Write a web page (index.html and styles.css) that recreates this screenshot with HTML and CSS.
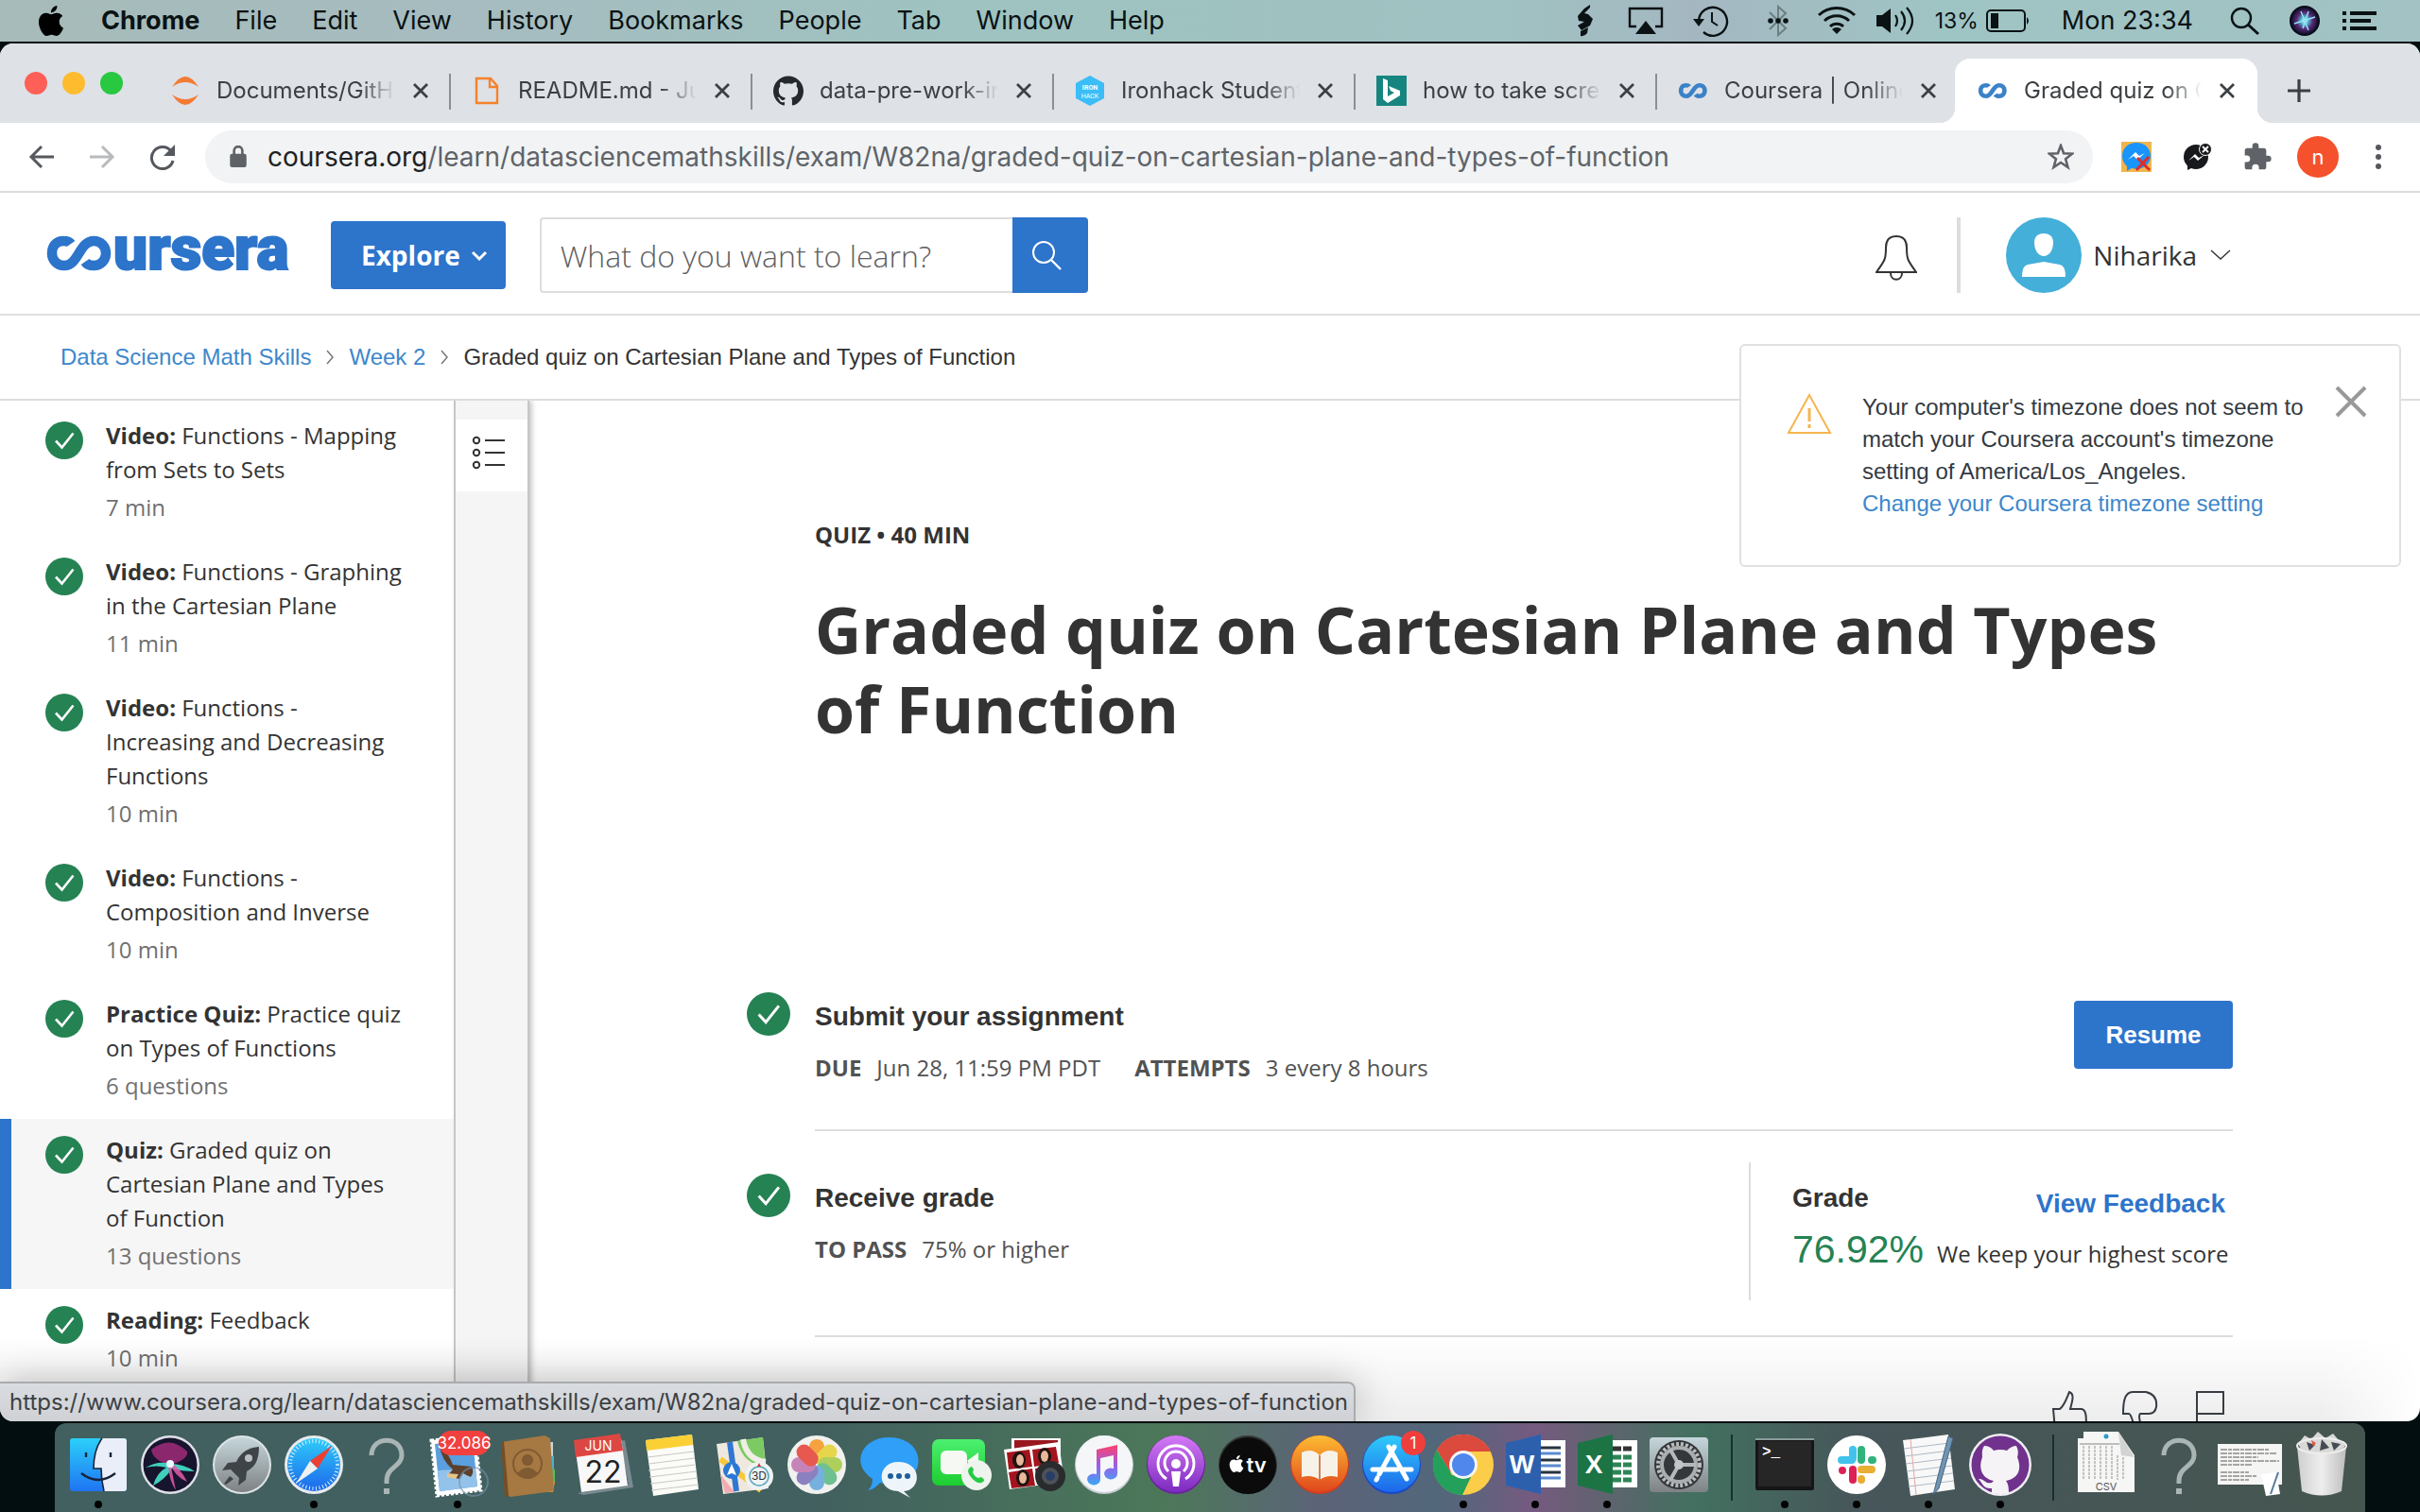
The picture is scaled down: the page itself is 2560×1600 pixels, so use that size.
FILE: index.html
```html
<!DOCTYPE html>
<html lang="en">
<head>
<meta charset="utf-8">
<title>Graded quiz on Cartesian Plane and Types of Function | Coursera</title>
<link rel="stylesheet" href="styles.css">
</head>
<body>
<svg class="defs" aria-hidden="true">
  <defs>
    <symbol id="check" viewBox="0 0 40 40"><circle cx="20" cy="20" r="20" fill="#258253"/><path d="M11 20.500l6.500 7L29.500 12.500" fill="none" stroke="#fff" stroke-width="2.600"/></symbol>
    <symbol id="close" viewBox="0 0 20 20"><path d="M3 3l14 14M17 3L3 17" stroke="currentColor" stroke-width="2.800" fill="none"/></symbol>
    <symbol id="apple" viewBox="0 0 24 24"><path d="M12.152 6.896c-.948 0-2.415-1.078-3.960-1.040-2.040.027-3.910 1.183-4.961 3.014-2.117 3.675-.546 9.103 1.519 12.090 1.013 1.454 2.208 3.090 3.792 3.039 1.520-.065 2.090-.987 3.935-.987 1.831 0 2.350.987 3.960.948 1.637-.026 2.676-1.480 3.676-2.948 1.156-1.688 1.636-3.325 1.662-3.415-.039-.013-3.182-1.221-3.220-4.857-.026-3.040 2.480-4.494 2.597-4.559-1.429-2.090-3.623-2.324-4.390-2.376-2-.156-3.675 1.090-4.610 1.090zM15.530 3.830c.843-1.012 1.400-2.427 1.245-3.830-1.207.052-2.662.805-3.532 1.818-.780.896-1.454 2.338-1.273 3.714 1.338.104 2.715-.688 3.559-1.701"/></symbol>
    <symbol id="infinity" viewBox="0 0 72 40"><path d="M27 10C25 7 22 7 19 7 11 7 7 13 7 20s5 13 13 13c15 0 16-26 31-26 8 0 13 6 13 13s-5 13-13 13c-4 0-7-1-9-4" fill="none" stroke="currentColor" stroke-width="10.500"/></symbol>
    <symbol id="question" viewBox="0 0 76 94"><path d="M23 34c0-21 32-21 32 0 0 12-16 12-16 27v3" fill="none" stroke="#a9b5b4" stroke-width="5"/><rect x="36" y="69" width="6" height="6" fill="#a9b5b4"/></symbol>
    <radialGradient id="g-siri"><stop offset="0" stop-color="#e8fbff"/><stop offset=".3" stop-color="#4fb3c9"/><stop offset=".6" stop-color="#5a2a78"/><stop offset="1" stop-color="#11122c"/></radialGradient>
    <linearGradient id="g-finder" x2="0" y2="1"><stop offset="0" stop-color="#2bd0fa"/><stop offset="1" stop-color="#1f74f3"/></linearGradient>
    <linearGradient id="g-silver" x2="0" y2="1"><stop offset="0" stop-color="#c5d6db"/><stop offset="1" stop-color="#7e8284"/></linearGradient>
    <linearGradient id="g-blue" x2="0" y2="1"><stop offset="0" stop-color="#2ecbfa"/><stop offset="1" stop-color="#1d67ea"/></linearGradient>
    <linearGradient id="g-green" x2="0" y2="1"><stop offset="0" stop-color="#4cf070"/><stop offset="1" stop-color="#1ccd30"/></linearGradient>
    <linearGradient id="g-purple" x2="0" y2="1"><stop offset="0" stop-color="#d37af5"/><stop offset="1" stop-color="#7c2bc0"/></linearGradient>
    <linearGradient id="g-orange" x2="0" y2="1"><stop offset="0" stop-color="#fdbc32"/><stop offset="1" stop-color="#e0461d"/></linearGradient>
    <linearGradient id="g-note" x2="0" y2="1"><stop offset="0" stop-color="#ff4268"/><stop offset=".5" stop-color="#9d5ce8"/><stop offset="1" stop-color="#3aa8f5"/></linearGradient>
    <linearGradient id="g-trash" x2="1" y2="0"><stop offset="0" stop-color="#cfcfcf"/><stop offset=".5" stop-color="#eee"/><stop offset="1" stop-color="#bdbdbd"/></linearGradient>
  </defs>
</svg>

<nav class="menubar" aria-label="Menu bar">
  <ul class="menus">
    <li><button type="button" aria-label="Apple"><svg class="apple"><use href="#apple"/></svg></button></li>
    <li><button type="button" class="app">Chrome</button></li>
    <li><button type="button">File</button></li>
    <li><button type="button">Edit</button></li>
    <li><button type="button">View</button></li>
    <li><button type="button">History</button></li>
    <li><button type="button">Bookmarks</button></li>
    <li><button type="button">People</button></li>
    <li><button type="button">Tab</button></li>
    <li><button type="button">Window</button></li>
    <li><button type="button">Help</button></li>
  </ul>
  <div class="tray">
    <svg class="w60" viewBox="0 0 44 44"><path d="M27 5l-6 4-7 8 1 5 6 1-7 4 4 5 9-5 3-7-5-5-4-1 6-6z" fill="#0a1214"/><path d="M17 33l8-4-1 6q-3 4-7 3z" fill="#0a1214"/></svg>
    <svg class="w68" viewBox="0 0 44 44"><path d="M12 28H5V9h34v19h-7" fill="none" stroke="#0a1214" stroke-width="2.400"/><path d="M22 22l11 14H11z" fill="#0a1214"/></svg>
    <svg class="w72" viewBox="0 0 44 44"><path d="M8 22A15 15 0 1 1 13 34" fill="none" stroke="#0a1214" stroke-width="2.400"/><path d="M2 20h12l-6 8z" fill="#0a1214"/><path d="M22 13v10l6 4" stroke="#0a1214" stroke-width="2" fill="none"/></svg>
    <svg class="w68" viewBox="0 0 44 44"><path d="M13 13l17 17-8 7V7l8 7-17 17" fill="none" stroke="#6b7f80" stroke-width="2"/><g fill="#0a1214"><circle cx="14" cy="22" r="2.800"/><circle cx="22" cy="22" r="2.800"/><circle cx="30" cy="22" r="2.800"/></g></svg>
    <svg class="w56" viewBox="0 0 44 44"><path d="M3 16a28 28 0 0 1 38 0M9 22a19 19 0 0 1 26 0M15 28a10 10 0 0 1 14 0" fill="none" stroke="#0a1214" stroke-width="3"/><path d="M17 31a7 7 0 0 1 10 0l-5 5z" fill="#0a1214"/></svg>
    <svg class="w68" viewBox="0 0 44 44"><path d="M2 16h6l9-7v26l-9-7H2z" fill="#0a1214"/><path d="M22 16q4 6 0 12M28 12q8 10 0 20M34 8q12 14 0 28" fill="none" stroke="#0a1214" stroke-width="2.200"/></svg>
    <span class="percent">13%</span>
    <svg class="battery" viewBox="0 0 48 44"><rect x="1" y="11" width="40" height="22" rx="4" fill="none" stroke="#0a1214" stroke-width="2"/><rect x="5" y="14" width="8" height="16" fill="#0a1214"/><path d="M43 18q4 4 0 8z" fill="#0a1214"/></svg>
    <time class="clock">Mon 23:34</time>
    <svg class="w68" viewBox="0 0 44 44"><circle cx="19" cy="19" r="10" fill="none" stroke="#0a1214" stroke-width="2.400"/><path d="M26 26l11 10" stroke="#0a1214" stroke-width="3"/></svg>
    <svg class="w60" viewBox="0 0 44 44"><circle cx="22" cy="22" r="16" fill="#0a0a1c"/><circle cx="22" cy="22" r="14" fill="url(#g-siri)"/><path d="M11 25l22-7M18 12l8 20M26 12l-6 18" stroke="#8fe4f5" stroke-width="1.500"/></svg>
    <svg class="w56" viewBox="0 0 44 44"><path d="M4 14h4M12 14h28M4 22h4M12 22h22M4 30h4M12 30h28" stroke="#0a1214" stroke-width="4"/></svg>
  </div>
</nav>

<div class="window">
  <div class="tabstrip">
    <div class="lights"><button type="button" class="red" aria-label="Close window"></button><button type="button" class="amber" aria-label="Minimise"></button><button type="button" class="lime" aria-label="Zoom"></button></div>
    <div class="tab"><svg class="fav" viewBox="0 0 32 32"><path d="M2 12q14-22 28 0Q16 2 2 12zM2 20q14 22 28 0-14 10-28 0z" fill="#f37b34"/></svg><span class="title">Documents/GitHub</span><button type="button" class="x" aria-label="Close tab"><svg><use href="#close"/></svg></button></div>
    <div class="tab"><svg class="fav" viewBox="0 0 32 32"><path d="M5 3h15l7 8v18H5zM19 3v9h8" fill="none" stroke="#f5822b" stroke-width="2.400"/></svg><span class="title">README.md - Jupyter</span><button type="button" class="x" aria-label="Close tab"><svg><use href="#close"/></svg></button></div>
    <div class="tab"><svg class="fav" viewBox="0 0 24 24"><path fill="#24292e" d="M12 .297c-6.630 0-12 5.373-12 12 0 5.303 3.438 9.800 8.205 11.385.600.113.820-.258.820-.577 0-.285-.010-1.040-.015-2.040-3.338.724-4.042-1.610-4.042-1.610C4.422 18.070 3.633 17.700 3.633 17.700c-1.087-.744.084-.729.084-.729 1.205.084 1.838 1.236 1.838 1.236 1.070 1.835 2.809 1.305 3.495.998.108-.776.417-1.305.760-1.605-2.665-.300-5.466-1.332-5.466-5.930 0-1.310.465-2.380 1.235-3.220-.135-.303-.540-1.523.105-3.176 0 0 1.005-.322 3.300 1.230.960-.267 1.980-.399 3-.405 1.020.006 2.040.138 3 .405 2.280-1.552 3.285-1.230 3.285-1.230.645 1.653.240 2.873.120 3.176.765.840 1.230 1.910 1.230 3.220 0 4.610-2.805 5.625-5.475 5.920.420.360.810 1.096.810 2.220 0 1.606-.015 2.896-.015 3.286 0 .315.210.690.825.570C20.565 22.092 24 17.592 24 12.297c0-6.627-5.373-12-12-12"/></svg><span class="title">data-pre-work-ironhack</span><button type="button" class="x" aria-label="Close tab"><svg><use href="#close"/></svg></button></div>
    <div class="tab"><svg class="fav" viewBox="0 0 32 32"><path d="M16 0l15 8v16l-15 8-15-8V8z" fill="#3bbdf7"/><text x="16" y="15" class="hex b">IRON</text><text x="16" y="24" class="hex">HACK</text></svg><span class="title">Ironhack Student Portal</span><button type="button" class="x" aria-label="Close tab"><svg><use href="#close"/></svg></button></div>
    <div class="tab"><svg class="fav" viewBox="0 0 32 32"><path d="M0 0h32v32H0z" fill="#16857f"/><path d="M7 3l5 2v17l7-4-4-2-2-5 12 5v5l-13 8-5-4z" fill="#fff"/></svg><span class="title">how to take screenshot</span><button type="button" class="x" aria-label="Close tab"><svg><use href="#close"/></svg></button></div>
    <div class="tab last"><svg class="fav co"><use href="#infinity"/></svg><span class="title">Coursera | Online Courses</span><button type="button" class="x" aria-label="Close tab"><svg><use href="#close"/></svg></button></div>
    <div class="tab active"><svg class="fav co"><use href="#infinity"/></svg><span class="title">Graded quiz on Cartesian</span><button type="button" class="x" aria-label="Close tab"><svg><use href="#close"/></svg></button></div>
    <button type="button" class="newtab" aria-label="New tab"><svg viewBox="0 0 24 24"><path d="M12 0v24M0 12h24" stroke="#3c4043" stroke-width="3.200"/></svg></button>
  </div>

  <div class="toolbar">
    <button type="button" aria-label="Back"><svg viewBox="0 0 28 28"><path d="M27 14H3M14 3L3 14l11 11" fill="none" stroke="#55595e" stroke-width="3"/></svg></button>
    <button type="button" aria-label="Forward"><svg viewBox="0 0 28 28"><path d="M1 14h24M14 3l11 11-11 11" fill="none" stroke="#b8babd" stroke-width="3"/></svg></button>
    <button type="button" aria-label="Reload"><svg viewBox="0 0 28 28"><path d="M23 8A11.500 11.500 0 1 0 25 18" fill="none" stroke="#55595e" stroke-width="3"/><path d="M27 1v12H15z" fill="#55595e"/></svg></button>
    <div class="omnibox">
      <svg class="lock" viewBox="0 0 16 22"><rect y="8" width="16" height="13" rx="2" fill="#5f6368"/><path d="M4 9V5a4 4 0 0 1 8 0v4" fill="none" stroke="#5f6368" stroke-width="2.400"/></svg>
      <div class="url" role="textbox" contenteditable="true" spellcheck="false" aria-label="Address"><span>coursera.org</span>/learn/datasciencemathskills/exam/W82na/graded-quiz-on-cartesian-plane-and-types-of-function</div>
      <button type="button" aria-label="Bookmark this page"><svg viewBox="0 0 28 28"><path d="M14 2l3.100 8.300 9 .400-7 5.600 2.400 8.700-7.500-5-7.500 5 2.400-8.700-7-5.600 9-.400z" fill="none" stroke="#5f6368" stroke-width="2.600"/></svg></button>
    </div>
    <button type="button" class="ext" aria-label="Messenger extension"><svg viewBox="0 0 32 32"><path d="M0 0h32v32H0z" fill="#f0b54c"/><path d="M16 1C6 1 1 8 1 15c0 5 2 8 5 11v5l5-3c12 3 20-4 20-13C31 8 26 1 16 1z" fill="#1a94fd"/><path d="M7 19l8-8 4 4 6-3-8 7-4-4z" fill="#fff"/><path d="M17 17l13 13M29 16L16 30" stroke="#e22b24" stroke-width="3"/></svg></button>
    <button type="button" class="ext" aria-label="Messenger helper"><svg viewBox="0 0 32 32"><circle cx="15" cy="16" r="13" fill="#17191c"/><path d="M6 20v10l8-4z" fill="#17191c"/><path d="M7 20l7-7 4 4 6-3-7 6-4-4z" fill="#fff"/><circle cx="25" cy="8" r="6.500" fill="#17191c" stroke="#fff"/><path d="M22 5l6 6M28 5l-6 6" stroke="#fff" stroke-width="1.800"/></svg></button>
    <button type="button" class="ext" aria-label="Extensions"><svg viewBox="0 0 24 24"><path d="M20.500 11H19V7a2 2 0 0 0-2-2h-4V3.500a2.500 2.500 0 0 0-5 0V5H4a2 2 0 0 0-2 2v3.800h1.500a2.700 2.700 0 0 1 0 5.400H2V20a2 2 0 0 0 2 2h3.800v-1.500a2.700 2.700 0 0 1 5.400 0V22H17a2 2 0 0 0 2-2v-4h1.500a2.500 2.500 0 0 0 0-5z" fill="#5f6368"/></svg></button>
    <button type="button" class="profile" aria-label="Profile">n</button>
    <button type="button" class="more" aria-label="Chrome menu"><svg viewBox="0 0 8 28"><g fill="#55595e"><circle cx="4" cy="4" r="3"/><circle cx="4" cy="14" r="3"/><circle cx="4" cy="24" r="3"/></g></svg></button>
  </div>

  <div class="page">
    <header class="site">
      <a class="logo" href="#" aria-label="Coursera home"><svg><use href="#infinity"/></svg><span>ursera</span></a>
      <button type="button" class="explore">Explore <svg viewBox="0 0 16 16"><path d="M1 5l7 7 7-7" fill="none" stroke="#fff" stroke-width="3"/></svg></button>
      <form class="search"><input type="text" aria-label="Search" placeholder="What do you want to learn?"><button type="button" aria-label="Search"><svg viewBox="0 0 32 32"><circle cx="13" cy="13" r="11" fill="none" stroke="#fff" stroke-width="2"/><path d="M21 21l10 10" stroke="#fff" stroke-width="2.400"/></svg></button></form>
      <button type="button" class="bell" aria-label="Notifications"><svg viewBox="0 0 44 50"><path d="M22 2c-8 0-11 5-11 12 0 14-2 14-10 26h42c-8-12-10-12-10-26 0-7-3-12-11-12z" fill="none" stroke="#333" stroke-width="2"/><path d="M16 41c0 9 12 9 12 0" fill="none" stroke="#333" stroke-width="2"/></svg></button>
      <button type="button" class="user"><svg class="avatar" viewBox="0 0 80 80"><circle cx="40" cy="40" r="40" fill="#44afd9"/><path d="M40 17c7 0 10 4 10 10 0 7-4 14-10 14s-10-7-10-14c0-6 3-10 10-10z" fill="#fff"/><path d="M17 63q0-12 6-13l17-3 17 3q6 1 6 13z" fill="#fff"/></svg>Niharika<svg class="caret" viewBox="0 0 22 12"><path d="M1 1l10 9L21 1" fill="none" stroke="#333" stroke-width="1.400"/></svg></button>
    </header>
    <nav class="crumbs" aria-label="Breadcrumb">
      <a href="#">Data Science Math Skills</a><svg viewBox="0 0 8 16"><path d="M1 1l6 7-6 7" fill="none" stroke="#777" stroke-width="1.500"/></svg>
      <a href="#">Week 2</a><svg viewBox="0 0 8 16"><path d="M1 1l6 7-6 7" fill="none" stroke="#777" stroke-width="1.500"/></svg>
      <span>Graded quiz on Cartesian Plane and Types of Function</span>
    </nav>
    <div class="columns">
      <ul class="lessons">
        <li><a href="#"><svg><use href="#check"/></svg><span><b>Video:</b> Functions - Mapping from Sets to Sets<small>7 min</small></span></a></li>
        <li><a href="#"><svg><use href="#check"/></svg><span><b>Video:</b> Functions - Graphing in the Cartesian Plane<small>11 min</small></span></a></li>
        <li><a href="#"><svg><use href="#check"/></svg><span><b>Video:</b> Functions - Increasing and Decreasing Functions<small>10 min</small></span></a></li>
        <li><a href="#"><svg><use href="#check"/></svg><span><b>Video:</b> Functions - Composition and Inverse<small>10 min</small></span></a></li>
        <li><a href="#"><svg><use href="#check"/></svg><span><b>Practice Quiz:</b> Practice quiz on Types of Functions<small>6 questions</small></span></a></li>
        <li class="current"><a href="#"><svg><use href="#check"/></svg><span><b>Quiz:</b> Graded quiz on Cartesian Plane and Types of Function<small>13 questions</small></span></a></li>
        <li><a href="#"><svg><use href="#check"/></svg><span><b>Reading:</b> Feedback<small>10 min</small></span></a></li>
      </ul>
      <div class="rail"><button type="button" aria-label="Course outline"><svg viewBox="0 0 36 36"><g fill="none" stroke="#333" stroke-width="2"><circle cx="5" cy="5" r="3.200"/><circle cx="5" cy="18" r="3.200"/><circle cx="5" cy="31" r="3.200"/><path d="M14 5h21M14 18h21M14 31h21"/></g></svg></button></div>
      <main>
        <p class="kind">QUIZ • 40 MIN</p>
        <h1>Graded quiz on Cartesian Plane and Types of Function</h1>
        <section class="step">
          <svg class="tick"><use href="#check"/></svg>
          <div class="body">
            <div><h2>Submit your assignment</h2>
            <dl><dt>DUE</dt><dd>Jun 28, 11:59 PM PDT</dd><dt>ATTEMPTS</dt><dd>3 every 8 hours</dd></dl></div>
            <button type="button" class="resume">Resume</button>
          </div>
        </section>
        <section class="step">
          <svg class="tick"><use href="#check"/></svg>
          <div class="body graded">
            <div><h2>Receive grade</h2>
            <dl><dt>TO PASS</dt><dd>75% or higher</dd></dl></div>
            <div class="grade">
              <div class="row"><h2>Grade</h2><a href="#">View Feedback</a></div>
              <p><strong>76.92%</strong>We keep your highest score</p>
            </div>
          </div>
        </section>
        <div class="feedback">
          <button type="button" aria-label="Like"><svg viewBox="0 0 40 40"><path d="M4 42L2 20h7c5-4 7-11 10-18 6 2 3 10 1 18h12c5 1 5 7 5 22" fill="none" stroke="#3a4047" stroke-width="2"/></svg></button>
          <button type="button" aria-label="Dislike"><svg viewBox="0 0 40 40"><path d="M14 42c-1-8-4-17-6-17H2C2 14 3 2 12 2h14c9 2 12 8 11 16-1 5-4 7-8 7h-9c-3 3 1 8 1 17" fill="none" stroke="#3a4047" stroke-width="2"/></svg></button>
          <button type="button" aria-label="Flag"><svg viewBox="0 0 40 40"><path d="M6 42V2h28v23H6" fill="none" stroke="#3a4047" stroke-width="2"/></svg></button>
        </div>
      </main>
    </div>
    <aside class="toast" role="alert">
      <svg class="warn" viewBox="0 0 48 44"><path d="M24 2l22 40H2z" fill="none" stroke="#f6b44f" stroke-width="2"/><path d="M24 16v14M24 33v4" stroke="#f6b44f" stroke-width="3"/></svg>
      <p>Your computer's timezone does not seem to match your Coursera account's timezone setting of America/Los_Angeles. <a href="#">Change your Coursera timezone setting</a></p>
      <button type="button" aria-label="Dismiss"><svg viewBox="0 0 34 34"><path d="M2 2l30 30M32 2L2 32" stroke="#999" stroke-width="4"/></svg></button>
    </aside>
  </div>
  <div class="shade"></div>
  <div class="status">https://www.coursera.org/learn/datasciencemathskills/exam/W82na/graded-quiz-on-cartesian-plane-and-types-of-function</div>
</div>

<nav class="dock" aria-label="Dock">
  <button type="button" class="on" aria-label="Finder"><svg viewBox="0 0 76 94"><rect x="8" y="16" width="60" height="56" rx="3" fill="url(#g-finder)"/><path d="M42 16h23q3 0 3 3v50q0 3-3 3H44q-3-12-3-24h-8q0-20 9-32z" fill="#e9eef8"/><path d="M25 31v5M51 31v5M20 53q18 14 36 0" fill="none" stroke="#17233b" stroke-width="2.400"/><path d="M42 16q-9 12-9 32h8q0 12 3 24" fill="none" stroke="#17233b" stroke-width="1.600"/></svg></button>
  <button type="button" aria-label="Siri"><svg viewBox="0 0 76 94"><circle cx="38" cy="44" r="31" fill="#dfe0e8"/><circle cx="38" cy="44" r="28.500" fill="#17142d"/><path d="M18 28q20-16 38 2 2 8-18 14-18-4-20-16z" fill="#a02a78" opacity=".85"/><path d="M12 47q14-8 26-4 14 0 26 8-14 0-24-3-8 12-20 18 4-14 14-19-10-3-22 0z" fill="#3fd0bd"/><path d="M38 42l6 29q-7-10-8-26zM38 42q10 4 18 20-14-6-18-20z" fill="#e35ba9" opacity=".85"/><circle cx="38" cy="43" r="4" fill="#eaffff"/></svg></button>
  <button type="button" aria-label="Launchpad"><svg viewBox="0 0 76 94"><circle cx="38" cy="44" r="31" fill="#dde4e6"/><circle cx="38" cy="44" r="29" fill="url(#g-silver)"/><path d="M56 25c-14 1-20 8-24 16l-9 1-6 8 9-1 9 9-1 8 8-6 1-9c8-4 13-11 13-26zM25 56l-6 8 2 1 8-6z" fill="#3f4449"/><circle cx="45" cy="37" r="4" fill="#b8c0c4"/></svg></button>
  <button type="button" class="on" aria-label="Safari"><svg viewBox="0 0 76 94"><circle cx="38" cy="44" r="31" fill="#e7ebed"/><circle cx="38" cy="44" r="28" fill="url(#g-blue)"/><circle cx="38" cy="44" r="25" fill="none" stroke="#d7f1ff" stroke-width="4" stroke-dasharray="1 2.600"/><path d="M57 24L42 48l-8-8z" fill="#ed4034"/><path d="M19 64l15-24 8 8z" fill="#eef0f2"/></svg></button>
  <button type="button" aria-label="Unknown application"><svg><use href="#question"/></svg></button>
  <button type="button" class="on" aria-label="Mail"><svg viewBox="0 0 76 94"><path d="M10 18l47-5 6 58-47 6z" fill="#fff" stroke="#fff" stroke-width="3" stroke-dasharray="3 2"/><path d="M14 22l40-5 5 50-40 5z" fill="#5b9fdf"/><path d="M17 50l40-2 2 19-40 5z" fill="#93c3ea"/><path d="M19 24q10 8 14 20l20 2q3 6-1 11-5-2-8-4l-4 6-13-3 6-7q-12-10-14-25z" fill="#5c402c"/><path d="M27 53l12 1-3 5-9-2z" fill="#e5c48a"/><circle cx="55" cy="62" r="15" fill="none" stroke="#7694ad" stroke-width="2" opacity=".6"/><rect x="18" y="8" width="54" height="26" rx="13" fill="#f2403f"/><text x="45" y="27" class="badge">32.086</text></svg></button>
  <button type="button" aria-label="Contacts"><svg viewBox="0 0 76 94"><path d="M55 20h8v15h-8z" fill="#cad3d6"/><path d="M56 35h8v14h-8z" fill="#4cb0cf"/><path d="M57 49h8v13h-8z" fill="#53be5a"/><path d="M58 62h7l-2 11h-6z" fill="#e99c29"/><path d="M8 20l46-7 6 3 4 56-46 6-4-3z" fill="#a67842"/><path d="M8 20l4 58 4-1-5-58z" fill="#754e25"/><g fill="none" stroke="#805a31" stroke-width="2"><circle cx="36" cy="43" r="15"/></g><circle cx="36" cy="39" r="6" fill="#805a31"/><path d="M25 53q11-12 22 0-10 9-22 0z" fill="#805a31"/></svg></button>
  <button type="button" aria-label="Calendar"><svg viewBox="0 0 76 94"><path d="M13 74l54-9-9-46 5-1 9 50-53 8z" fill="#7b8a91"/><path d="M10 23l49-7 7 50-49 7z" fill="#f8f8f8"/><path d="M9 18l49-7 3 18-50 7z" fill="#dd4743"/><text x="35" y="29" class="cal-m">JUN</text><text x="40" y="63" class="cal-d">22</text></svg></button>
  <button type="button" aria-label="Notes"><svg viewBox="0 0 76 94"><path d="M9 18l49-6 7 58-48 7z" fill="#fbfbf8"/><path d="M9 18l49-6 1 11-49 6z" fill="#fbd034"/><path d="M11 36l49-6M12 43l49-6M12 50l49-6M13 57l50-6M14 64l50-6M15 71l50-6" stroke="#c8c8c4" stroke-width="1.200"/></svg></button>
  <button type="button" aria-label="Maps"><svg viewBox="0 0 76 94"><path d="M8 22l49-7 6 54-48 6z" fill="#eee8de"/><path d="M30 19l27-4 3 31q-24-2-30-27z" fill="#7bcb62"/><path d="M36 17q4 22 24 24" fill="none" stroke="#f0eee6" stroke-width="6"/><path d="M12 38l43 33" stroke="#f9c838" stroke-width="6"/><path d="M22 20l7 52" stroke="#3177d1" stroke-width="6"/><path d="M12 54l5 20 10-1z" fill="#f4a9b4"/><circle cx="24" cy="50" r="9" fill="#2a78d6"/><path d="M24 43l5 12-5-2-5 2z" fill="#fff"/><circle cx="53" cy="56" r="15" fill="#eef2f3"/><circle cx="53" cy="56" r="10" fill="none" stroke="#59a4ba" stroke-width="1.500"/><path d="M53 42l2 4h-4z" fill="#d5362f"/><text x="53" y="60" class="tiny">3D</text></svg></button>
  <button type="button" aria-label="Photos"><svg viewBox="0 0 76 94"><circle cx="38" cy="44" r="31" fill="#f1f1ef"/><g opacity=".9"><rect x="30" y="17" width="16" height="26" rx="8" fill="#f59b2d"/><rect x="30" y="17" width="16" height="26" rx="8" fill="#e6d43a" transform="rotate(45 38 44)"/><rect x="30" y="17" width="16" height="26" rx="8" fill="#a7cc4b" transform="rotate(90 38 44)"/><rect x="30" y="17" width="16" height="26" rx="8" fill="#62bb86" transform="rotate(135 38 44)"/><rect x="30" y="17" width="16" height="26" rx="8" fill="#69aade" transform="rotate(180 38 44)"/><rect x="30" y="17" width="16" height="26" rx="8" fill="#8175bd" transform="rotate(225 38 44)"/><rect x="30" y="17" width="16" height="26" rx="8" fill="#c278b3" transform="rotate(270 38 44)"/><rect x="30" y="17" width="16" height="26" rx="8" fill="#e6493d" transform="rotate(315 38 44)"/></g></svg></button>
  <button type="button" aria-label="Messages"><svg viewBox="0 0 76 94"><path d="M38 15c42 0 42 49 0 50l-9-2q-6 7-13 8 5-4 5-12C-4 42 11 15 38 15z" fill="#2f9ff8"/><path d="M48 41c26 0 25 30 6 31l7 7-13-7c-24-1-22-31 0-31z" fill="#eef5fa"/><g fill="#1f5f98"><circle cx="40" cy="56" r="3"/><circle cx="49" cy="56" r="3"/><circle cx="58" cy="56" r="3"/></g></svg></button>
  <button type="button" aria-label="FaceTime"><svg viewBox="0 0 76 94"><rect x="8" y="17" width="56" height="49" rx="7" fill="url(#g-green)"/><rect x="17" y="29" width="28" height="25" rx="6" fill="#f5f8f3"/><path d="M45 40l12-9v22z" fill="#f5f8f3"/><circle cx="55" cy="55" r="16" fill="#eff3ee"/><path d="M48 47q2-3 4 2l-1 3q2 5 6 6l3-1q5 3 2 5-4 3-9-1-6-5-7-10 0-3 2-4z" fill="#26cb45"/></svg></button>
  <button type="button" aria-label="Photo Booth"><svg viewBox="0 0 76 94"><rect x="16" y="16" width="52" height="30" fill="#fff"/><rect x="19" y="18" width="46" height="26" fill="#9a171f"/><path d="M8 28l58-8 6 42-58 8z" fill="#fff"/><path d="M11 31l24-3 3 18-25 3zM38 28l25-3 3 17-26 4zM13 52l25-4 3 18-25 3zM41 48l25-3 2 17-25 3z" fill="#a3151e"/><g fill="#1e1412"><ellipse cx="24" cy="39" rx="7" ry="9"/><ellipse cx="51" cy="35" rx="7" ry="9"/><ellipse cx="28" cy="58" rx="7" ry="9"/></g><g fill="#e9b799"><ellipse cx="25" cy="39" rx="4" ry="6"/><ellipse cx="51" cy="35" rx="4" ry="6"/><ellipse cx="28" cy="58" rx="4" ry="6"/></g><circle cx="57" cy="56" r="16" fill="#292b2d"/><circle cx="57" cy="56" r="9" fill="#4e5257"/><circle cx="57" cy="56" r="5" fill="#293d67"/></svg></button>
  <button type="button" aria-label="Music"><svg viewBox="0 0 76 94"><circle cx="38" cy="44" r="31" fill="#c8cdd2"/><circle cx="38" cy="43" r="30" fill="#f5f6f8"/><path d="M30 28l22-5v30a7 6 0 1 1-4-5V34l-14 3v22a7 6 0 1 1-4-5z" fill="url(#g-note)"/></svg></button>
  <button type="button" aria-label="Podcasts"><svg viewBox="0 0 76 94"><circle cx="38" cy="44" r="31" fill="#6c249b"/><circle cx="38" cy="43" r="30" fill="url(#g-purple)"/><g fill="none" stroke="#fff" stroke-width="3"><path d="M28 59a19 19 0 1 1 20 0M30 51a12 12 0 1 1 16 0"/></g><circle cx="38" cy="43" r="5" fill="#fff"/><path d="M33 51h10l-2 16h-6z" fill="#fff"/></svg></button>
  <button type="button" aria-label="TV"><svg viewBox="0 0 76 94"><circle cx="38" cy="44" r="31" fill="#353535"/><circle cx="38" cy="45" r="30" fill="#0b0b0b"/><use href="#apple" x="17" y="34" width="18" height="18" fill="#fff"/><text x="47" y="52" class="tv">tv</text></svg></button>
  <button type="button" aria-label="Books"><svg viewBox="0 0 76 94"><circle cx="38" cy="44" r="31" fill="#cf3d1c"/><circle cx="38" cy="43" r="30" fill="url(#g-orange)"/><path d="M38 34q-8-8-19-3v26q11-3 19 3 8-6 19-3V31q-11-5-19 3z" fill="#f7f2e8"/><path d="M38 34v26" stroke="#c65a28" stroke-width="1.500"/></svg></button>
  <button type="button" aria-label="App Store"><svg viewBox="0 0 76 94"><circle cx="38" cy="44" r="31" fill="#1749c9"/><circle cx="38" cy="43" r="30" fill="url(#g-blue)"/><path d="M41 25L25 54M35 25l19 34M18 49h26M51 49h8M23 58l-1 2" stroke="#fff" stroke-width="5" stroke-linecap="round"/><circle cx="61" cy="21" r="13" fill="#ef3f3d"/><text x="61" y="27" class="badge">1</text></svg></button>
  <button type="button" class="on" aria-label="Chrome"><svg viewBox="0 0 76 94"><circle cx="38" cy="44" r="32" fill="#fccd48"/><path d="M38 12A32 32 0 0 1 67 30H38L24 52 10 28A32 32 0 0 1 38 12z" fill="#dc493d"/><path d="M10 28l16 27 20 2-9 19A32 32 0 0 1 10 28z" fill="#22a05c"/><circle cx="38" cy="44" r="15" fill="#f5f5f5"/><circle cx="38" cy="44" r="12" fill="#5087ec"/></svg></button>
  <button type="button" class="on" aria-label="Word"><svg viewBox="0 0 76 94"><path d="M40 18h30v50H40z" fill="#fff"/><path d="M44 26h21M44 39h21M44 52h21" stroke="#28343f" stroke-width="3"/><path d="M44 32h21M44 45h21M44 58h21" stroke="#5a8ad1" stroke-width="3"/><path d="M7 21l37-9v63L7 66z" fill="#2c60ad"/><text x="24" y="53" class="office">W</text></svg></button>
  <button type="button" class="on" aria-label="Excel"><svg viewBox="0 0 76 94"><path d="M40 18h30v50H40z" fill="#fff"/><path d="M44 27h21" stroke="#333" stroke-width="5" stroke-dasharray="9 2"/><path d="M44 36h21M44 44h21M44 52h21M44 60h21" stroke="#2d8555" stroke-width="5" stroke-dasharray="9 2"/><path d="M7 21l37-9v63L7 66z" fill="#1c7445"/><text x="24" y="53" class="office">X</text></svg></button>
  <button type="button" aria-label="System Preferences"><svg viewBox="0 0 76 94"><rect x="7" y="15" width="62" height="58" rx="4" fill="url(#g-silver)"/><circle cx="38" cy="44" r="26" fill="#35383a"/><circle cx="38" cy="44" r="22" fill="none" stroke="#babdbe" stroke-width="4" stroke-dasharray="3 2"/><circle cx="38" cy="44" r="18" fill="none" stroke="#aaaeb0" stroke-width="4"/><path d="M38 44h18M38 44l-9-16M38 44l-9 16" stroke="#b5b9ba" stroke-width="4"/><circle cx="38" cy="44" r="5" fill="#c3c6c7"/></svg></button>
  <hr>
  <button type="button" class="on" aria-label="Terminal"><svg viewBox="0 0 76 94"><rect x="7" y="16" width="62" height="55" rx="2" fill="#151515"/><rect x="10" y="19" width="56" height="48" fill="#262626"/><path d="M7 16h62v2H7z" fill="#899b9d"/><text x="14" y="35" class="term">&gt;_</text></svg></button>
  <button type="button" class="on" aria-label="Slack"><svg viewBox="0 0 76 94"><circle cx="38" cy="44" r="31" fill="#fff"/><g stroke-width="8" stroke-linecap="round"><path d="M34 28v9M22 39h11" stroke="#42c3ec"/><path d="M43 28v11M54 39h1" stroke="#31b47b"/><path d="M43 49h11M43 59v1" stroke="#e9ae34"/><path d="M34 49v11M23 50h0" stroke="#df2057"/></g></svg></button>
  <button type="button" class="on" aria-label="TextEdit"><svg viewBox="0 0 76 94"><path d="M11 18l48-6 7 58-47 7z" fill="#f8f8f8"/><path d="M12 27l48-6M13 35l48-6M14 43l48-6M15 51l48-6M16 59l48-6M17 67l48-6" stroke="#aeb9c3"/><path d="M19 17l6 59" stroke="#e8a5a5"/><path d="M59 14l5 2-15 53-6 7 2-8z" fill="#6f95b5" stroke="#47637d"/></svg></button>
  <button type="button" class="on" aria-label="GitHub Desktop"><svg viewBox="0 0 76 94"><circle cx="38" cy="44" r="33" fill="#f0eef3"/><circle cx="38" cy="44" r="30.500" fill="#71328d"/><path d="M21 24q6 0 10 5 7-2 14 0 5-5 10-5 3 6 1 12c6 15-1 23-12 25q3 3 3 13-9 2-18 0v-5c-9 1-10-6-14-10 6-1 7 6 14 4l2-2c-11-2-17-12-12-25q-1-8 2-12z" fill="#f5f3f5"/></svg></button>
  <hr>
  <button type="button" aria-label="Downloads"><svg viewBox="0 0 76 94"><path d="M14 9h37l17 25v39H8V16h6z" fill="#f6f6f5"/><path d="M14 24v36M20 24v36M26 24v36M32 24v36M38 24v36M44 24v36M50 34v26M56 36v24" stroke="#c4c4c4" stroke-width="2" stroke-dasharray="3 1"/><path d="M10 22h42" stroke="#aaa" stroke-width="1.500"/><path d="M51 9q2 18 3 25l14 2z" fill="#d2d3d3"/><circle cx="38" cy="14" r="2.500" fill="#2e98cc"/><text x="38" y="71" class="csv">CSV</text></svg></button>
  <button type="button" aria-label="Unknown folder"><svg><use href="#question"/></svg></button>
  <button type="button" aria-label="Minimised window"><svg viewBox="0 0 76 94"><path d="M4 22h68v43H4z" fill="#f5f5f4"/><path d="M7 28h52M7 32h60M7 36h40M7 40h62M7 44h34M7 52h30M7 56h38M7 60h30" stroke="#8b8b8b" stroke-width="1.400" stroke-dasharray="7 1 4 1"/><path d="M50 54l16-2 4 23-15 2z" fill="#fff"/><path d="M68 52l-8 23" stroke="#557a98" stroke-width="2"/></svg></button>
  <button type="button" aria-label="Trash"><svg viewBox="0 0 76 94"><path d="M13 22l7-9 7 4 7-8 8 7 8-5 6 7 8 4-8 12H20z" fill="#d8d8d7"/><path d="M12 25q26 12 52 0l-5 47q-21 9-42 0z" fill="url(#g-trash)"/><path d="M22 20l9 3-6 6zM38 17l8 9-10 3zM48 20l10 2-7 7z" fill="#444b55"/><path d="M27 18l5 3-3 4z" fill="#e1563f"/><ellipse cx="38" cy="24" rx="26" ry="8" fill="none" stroke="#eee" stroke-width="2"/></svg></button>
</nav>
</body>
</html>
```
FILE: styles.css
```css
* { box-sizing: border-box; }
body { margin: 0; min-height: 100vh; height: 100vh; display: grid; grid-template-rows: auto 1fr auto; row-gap: 2px; background: #020e10; font-family: "Open Sans", sans-serif; color: #333; overflow: hidden; }
button { border: 0; padding: 0; margin: 0; background: none; font: inherit; color: inherit; }
button svg { display: block; }
a { text-decoration: none; color: #3e87cb; }
ul, p, h1, h2, dl, dd { margin: 0; padding: 0; }
.defs { position: absolute; width: 0; height: 0; }

/* macOS menu bar */
.menubar { height: 44px; display: flex; justify-content: space-between; align-items: center; font: 27px/44px Inter, sans-serif; color: #0a1214; background: linear-gradient(90deg, #a6bbb9, #a6bcc0 20%, #9ec3c0 40%, #a0c2c2 62%, #a4b7c1 70%, #9fc4c4 80%, #a2c2c3); }
.menus { display: flex; gap: 37px; list-style: none; padding-left: 38px; align-items: center; }
.menus button { display: block; line-height: 44px; }
.menus .app { font-weight: 700; }
.apple { width: 32px; height: 32px; }
.tray { display: flex; align-items: center; padding-right: 36px; }
.tray svg { height: 44px; }
.w56 { width: 56px; } .w60 { width: 60px; } .w68 { width: 68px; } .w72 { width: 72px; }
.percent { font-size: 23px; margin: 0 8px; }
.battery { width: 48px; }
.clock { margin: 0 20px 0 32px; }

/* Browser chrome */
.window { position: relative; background: #fff; border-radius: 14px; overflow: hidden; display: flex; flex-direction: column; min-height: 0; }
.tabstrip { height: 84px; flex: none; display: flex; align-items: flex-end; background: #dee1e6; font: 24px/32px Inter, sans-serif; color: #3c4043; }
.lights { display: flex; gap: 16px; width: 158px; padding-left: 26px; height: 84px; align-items: center; flex: none; }
.lights button { width: 24px; height: 24px; border-radius: 50%; }
.lights .red { background: #fe5f57; }
.lights .amber { background: #febb2e; }
.lights .lime { background: #28c840; }
.tab { flex: 0 1 319px; min-width: 0; height: 68px; display: flex; align-items: center; padding: 0 22px; gap: 17px; position: relative; }
.tab::after { content: ""; position: absolute; right: 0; top: 16px; height: 38px; width: 2px; background: #8b8f94; }
.tab.last::after { display: none; }
.tab.active { flex-basis: 320px; margin-left: -4px; background: #fff; border-radius: 16px 16px 0 0; padding-left: 24px; }
.tab.active::before, .tab.active::after { content: ""; position: absolute; top: auto; bottom: 0; width: 16px; height: 16px; }
.tab.active::before { left: -16px; background: radial-gradient(circle at 0 0, transparent 16px, #fff 16px); }
.tab.active::after { right: -16px; background: radial-gradient(circle at 100% 0, transparent 16px, #fff 16px); }
.fav { width: 32px; height: 32px; flex: none; }
.co { color: #3b82c7; }
.title { flex: 1; min-width: 0; white-space: nowrap; overflow: hidden; mask-image: linear-gradient(90deg, #000 80%, transparent); }
.x svg { width: 20px; height: 20px; }
.newtab { align-self: flex-end; height: 68px; width: 88px; display: grid; place-items: center; }
.newtab svg { width: 24px; height: 24px; }
.hex { font: 7px Roboto, sans-serif; fill: #fff; text-anchor: middle; } .b { font-weight: 700; }
.toolbar { height: 74px; flex: none; display: flex; align-items: center; padding: 0 30px; border-bottom: 2px solid #dadce0; }
.toolbar > button { flex: none; width: 64px; }
.toolbar > button svg { width: 28px; height: 28px; }
.omnibox { flex: 1; min-width: 0; height: 56px; border-radius: 28px; background: #f1f3f4; display: flex; align-items: center; padding: 0 20px 0 26px; margin: 0 30px 0 -5px; font: 28px/56px Inter, sans-serif; color: #5f6368; }
.omnibox > button svg { width: 28px; height: 28px; }
.lock { width: 18px; height: 24px; flex: none; margin-right: 22px; }
.url { flex: 1; min-width: 0; white-space: nowrap; overflow: hidden; }
.url span { color: #202124; }
.toolbar .ext svg { width: 32px; height: 32px; }
.toolbar .profile { width: 44px; height: 44px; border-radius: 50%; background: #f4512c; color: #fff; font: 22px/44px Inter, sans-serif; margin: 0 28px 0 -6px; }
.toolbar .more { width: 28px; }
.toolbar .more svg { width: 28px; }

/* Course page */
.page { position: relative; flex: 1; min-height: 0; display: flex; flex-direction: column; }
.site { flex: none; display: flex; align-items: center; padding: 4px 200px 0 48px; border-bottom: 2px solid #e0e0e0; height: 130px; }
.logo { display: flex; align-items: center; width: 302px; color: #2d74cb; font: 900 64px/64px Roboto, sans-serif; }
.logo svg { width: 72px; height: 40px; flex: none; margin-top: -4px; }
.logo span { margin-top: -12px; -webkit-text-stroke: 2px #2d74cb; }
.explore { height: 72px; padding: 0 20px 0 32px; border-radius: 4px; background: #2d74cb; color: #fff; font: 700 28px/72px "Open Sans", sans-serif; display: flex; align-items: center; gap: 12px; margin-right: 36px; }
.explore svg { width: 16px; height: 16px; }
.search { display: flex; height: 80px; width: 580px; }
.search input { flex: 1; min-width: 0; border: 2px solid #ddd; border-right: 0; border-radius: 4px 0 0 4px; padding: 0 20px; font: 300 32px "Open Sans", sans-serif; color: #333; }
.search input::placeholder { color: #5e5e5e; opacity: 1; }
.search button { width: 80px; background: #2d74cb; border-radius: 0 4px 4px 0; display: grid; place-items: center; padding-right: 8px; }
.search svg { width: 32px; height: 32px; }
.bell { margin-left: auto; padding-right: 42px; height: 80px; border-right: 4px solid #ddd; }
.bell svg { width: 44px; height: 50px; margin-top: 6px; }
.user { display: flex; align-items: center; font-size: 28px; margin-left: 48px; }
.avatar { width: 80px; height: 80px; margin-right: 12px; }
.caret { width: 22px; height: 12px; margin-left: 14px; }
.crumbs { flex: none; height: 90px; display: flex; align-items: center; gap: 16px; padding-left: 64px; font: 24px/32px "Liberation Sans", Arial, sans-serif; border-bottom: 2px solid #ddd; }
.crumbs svg { width: 8px; height: 16px; }
.columns { flex: 1; min-height: 0; display: flex; overflow: hidden; }
.lessons { list-style: none; width: 482px; flex: none; border-right: 2px solid #c9c9c9; padding-top: 4px; font-size: 24px; line-height: 36px; }
.lessons a { display: flex; gap: 24px; padding: 15px 50px 17px 48px; color: #333; }
.lessons svg { width: 40px; height: 40px; margin-top: 3px; flex: none; }
.lessons small { display: block; font-size: 24px; margin-top: 4px; color: #707070; }
.current { background: #f6f6f6; box-shadow: inset 12px 0 #2d74cb; }
.rail { width: 78px; flex: none; background: #f5f5f5; padding-top: 20px; border-right: 2px solid #c6c6c6; box-shadow: 2px 0 6px #bbb; }
.rail button { width: 76px; height: 76px; background: #fff; display: grid; place-items: center; padding: 0 6px 6px 0; }
.rail svg { width: 36px; height: 36px; }
main { flex: 1; min-width: 0; padding: 124px 198px 0 230px; }
.kind { margin-left: 72px; font-weight: 700; font-size: 24px; line-height: 36px; }
h1 { margin: 40px 0 258px 72px; font-size: 68px; line-height: 84px; font-weight: 700; }
.step { display: grid; grid-template-columns: 46px 1fr; gap: 26px; }
.tick { width: 46px; height: 46px; }
.body { display: flex; justify-content: space-between; min-height: 147px; border-bottom: 2px solid #ddd; margin-bottom: 45px; }
.body.graded { min-height: 173px; }
h2 { font: 700 28px/52px "Liberation Sans", Arial, sans-serif; }
dl { display: flex; font-size: 24px; line-height: 36px; margin-top: 10px; color: #525252; }
dt { font-weight: 700; margin-right: 16px; }
dd { margin-right: 36px; }
.resume { width: 168px; height: 72px; margin-top: 9px; border-radius: 4px; background: #2d74cb; color: #fff; font: 700 26px/72px "Liberation Sans", Arial, sans-serif; }
.grade { width: 512px; padding-left: 44px; border-left: 2px solid #ddd; margin: -12px 0 37px; padding-top: 12px; }
.grade .row { display: flex; justify-content: space-between; padding-right: 8px; height: 60px; }
.grade .row a { font: 700 28px/64px "Liberation Sans", Arial, sans-serif; color: #2d74cb; }
.grade p { font-size: 24px; line-height: 40px; white-space: nowrap; }
.grade strong { font: 41px/40px "Liberation Sans", Arial, sans-serif; color: #258253; margin-right: 14px; }
.feedback { display: flex; justify-content: flex-end; gap: 34px; padding: 11px 4px 0 0; }
.feedback svg { width: 40px; height: 40px; }
.toast { position: absolute; top: 160px; right: 20px; width: 700px; height: 236px; border: 2px solid #e0e0e0; border-radius: 6px; background: #fff; display: flex; align-items: flex-start; padding: 48px 34px 0 48px; font: 24px/34px "Liberation Sans", Arial, sans-serif; color: #333a42; }
.warn { width: 48px; height: 44px; margin: 2px 32px 0 0; flex: none; }
.toast p { flex: 1; }
.toast a { display: block; }
.toast button { margin-top: -6px; }
.toast button svg { width: 34px; height: 34px; }
.shade { position: absolute; left: 0; right: 0; bottom: 0; height: 90px; background: linear-gradient(transparent, rgba(0, 0, 0, .07)); mask-image: linear-gradient(90deg, #000 96%, transparent); pointer-events: none; }
.status { position: absolute; left: 0; bottom: 0; height: 42px; padding: 0 6px 0 10px; border: 2px solid #a9abad; border-width: 2px 2px 0 0; border-radius: 0 8px 0 0; background: linear-gradient(#d9dce1, #cfd1d5); box-shadow: 0 0 40px rgba(0, 0, 0, .25); font: 24px/40px Inter, sans-serif; color: #3c4043; white-space: nowrap; }

/* Dock */
.dock { justify-self: center; display: flex; align-items: stretch; padding: 0 8px; border-radius: 12px 12px 0 0; background: linear-gradient(90deg, #41605f, #41605f 33%, #4c7859 48%, #5c6379 55%, #52677a 60%, #755a80 64%, #60636f 67%, #42705f 71%, #47565a 78%, #455650); }
.dock button { width: 76px; height: 94px; position: relative; }
.dock svg { width: 76px; height: 94px; }
.dock .on::after { content: ""; position: absolute; left: 34px; bottom: 4px; width: 8px; height: 8px; border-radius: 50%; background: #000; }
.dock hr { width: 2px; height: 70px; margin: 12px 17px; border: 0; background: #16302f; }
.badge { font: 17px Inter, sans-serif; fill: #fff; text-anchor: middle; }
.cal-m { font: 14px Inter, sans-serif; fill: #fff; text-anchor: middle; }
.cal-d { font: 32px Inter, sans-serif; fill: #222; text-anchor: middle; }
.tiny { font: 12px Inter, sans-serif; fill: #333; text-anchor: middle; }
.tv { font: 600 22px Inter, sans-serif; fill: #fff; text-anchor: middle; }
.office { font: 700 28px "Liberation Sans", sans-serif; fill: #fff; text-anchor: middle; }
.term { font: 700 16px "Liberation Mono", monospace; fill: #fff; }
.csv { font: 11px Inter, sans-serif; fill: #555; text-anchor: middle; }
```
